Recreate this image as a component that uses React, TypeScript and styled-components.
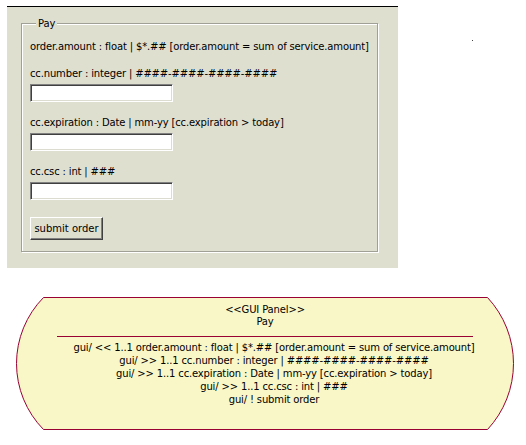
import React from 'react';
import styled, { createGlobalStyle } from 'styled-components';

const GlobalStyle = createGlobalStyle`
  html, body {
    margin: 0;
    padding: 0;
    background: #ffffff;
  }
  body {
    font-family: 'DejaVu Sans', Verdana, sans-serif;
    font-size: 10px;
    letter-spacing: -0.15px;
    color: #000000;
  }
`;

const SPage = styled.div`
  display: flex;
  flex-direction: column;
  padding: 6px 0 0 7px;
`;

const STopRow = styled.div`
  display: flex;
  align-items: flex-start;
`;

const SPanel = styled.div`
  width: 391px;
  box-sizing: border-box;
  background: #dfdfd0;
  border-top: 1px solid #000000;
  padding: 10px 20px 16px 14px;
`;

const SDot = styled.span`
  width: 1px;
  height: 1px;
  margin: 34px 0 0 74px;
  background: #444444;
`;

const SFieldset = styled.fieldset`
  margin: 0;
  padding: 10px 8px 11px;
  min-inline-size: 0;
  border: 1px solid #a0a096;
  box-shadow: inset 1px 1px 0 #ffffff, 1px 1px 0 #ffffff;
  display: flex;
  flex-direction: column;
  align-items: flex-start;
  gap: 14px;
`;

const SLegend = styled.legend`
  margin-left: 6px;
  padding: 0 2px;
  line-height: 13px;
  background: #dfdfd0;
`;

const SLabel = styled.div`
  line-height: 13px;
  white-space: nowrap;
`;

const SField = styled.div`
  display: flex;
  flex-direction: column;
  gap: 4px;
`;

const SInput = styled.input`
  width: 143px;
  height: 18px;
  box-sizing: border-box;
  margin: 0;
  padding: 0 3px;
  background: #ffffff;
  border: 1px solid;
  border-color: #808080 #ffffff #ffffff #808080;
  box-shadow: inset 1px 1px 0 #404040, inset -1px -1px 0 #dcdcd0;
  font: inherit;
  outline: none;
`;

const SButton = styled.button`
  margin-top: 3px;
  width: 73px;
  height: 23px;
  box-sizing: border-box;
  padding: 0;
  background: #dfdfd0;
  border: 1px solid;
  border-color: #ffffff #404040 #404040 #ffffff;
  box-shadow: inset -1px -1px 0 #808080;
  font: inherit;
  color: #000000;
`;

const SShape = styled.div`
  position: relative;
  width: 498px;
  height: 133px;
  margin: 29px 0 0 9px;
  box-sizing: border-box;
  padding-top: 7px;
  display: flex;
  flex-direction: column;
  align-items: center;
`;

const SOutline = styled.svg`
  position: absolute;
  inset: 0;
  z-index: 0;
`;

const STitle = styled.div`
  position: relative;
  line-height: 12px;
  text-align: center;
`;

const SRule = styled.div`
  position: relative;
  width: 416px;
  height: 1px;
  margin-top: 8px;
  background: #990033;
`;

const SLines = styled.div`
  position: relative;
  margin-top: 4px;
  padding-left: 18px;
  line-height: 13px;
  text-align: center;
  white-space: nowrap;
`;

const fields = [
  { label: 'cc.number : integer | ####-####-####-####' },
  { label: 'cc.expiration : Date | mm-yy [cc.expiration > today]' },
  { label: 'cc.csc : int | ###' },
];

const panelLines = [
  'gui/ << 1..1 order.amount : float | $*.## [order.amount = sum of service.amount]',
  'gui/ >> 1..1 cc.number : integer | ####-####-####-####',
  'gui/ >> 1..1 cc.expiration : Date | mm-yy [cc.expiration > today]',
  'gui/ >> 1..1 cc.csc : int | ###',
  'gui/ ! submit order',
];

const App = () => {
  return (
    <>
      <GlobalStyle />
      <SPage>
        <STopRow>
          <SPanel>
            <SFieldset>
              <SLegend>Pay</SLegend>
              <SLabel>order.amount : float | $*.## [order.amount = sum of service.amount]</SLabel>
              {fields.map((f) => (
                <SField key={f.label}>
                  <SLabel>{f.label}</SLabel>
                  <SInput type='text' />
                </SField>
              ))}
              <SButton type='button'>submit order</SButton>
            </SFieldset>
          </SPanel>
          <SDot />
        </STopRow>
        <SShape>
          <SOutline width='498' height='133' viewBox='0 0 498 133'>
            <path
              d='M27.5 0.5 H471.5 A96.8 96.8 0 0 1 471.5 132.5 H27.5 A94.2 94.2 0 0 1 27.5 0.5 Z'
              fill='#f9f7c8'
              stroke='#990033'
              strokeWidth='1'
            />
          </SOutline>
          <STitle>
            &lt;&lt;GUI Panel&gt;&gt;
            <br />
            Pay
          </STitle>
          <SRule />
          <SLines>
            {panelLines.map((l) => (
              <div key={l}>{l}</div>
            ))}
          </SLines>
        </SShape>
      </SPage>
    </>
  );
};

export default App;
